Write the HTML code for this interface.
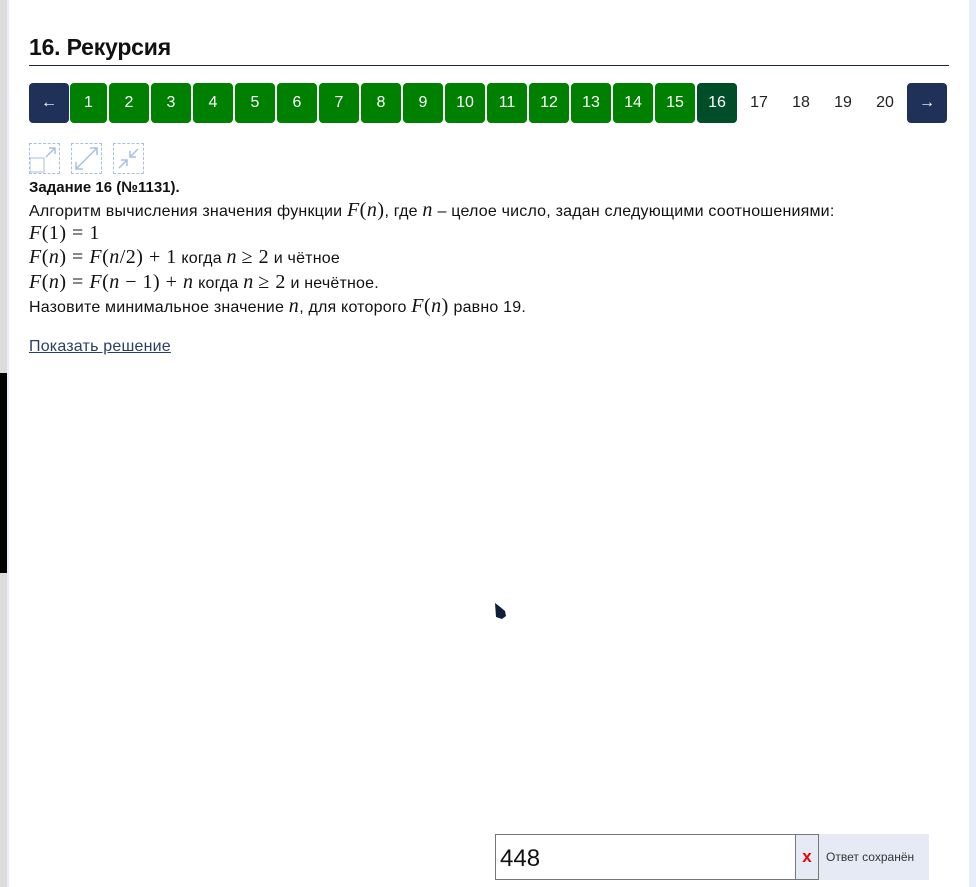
<!DOCTYPE html>
<html><head><meta charset="utf-8"><style>
*{margin:0;padding:0;box-sizing:border-box}
body{width:976px;height:887px;overflow:hidden;background:#fff;font-family:"Liberation Sans",sans-serif;color:#000;position:relative}
.ls{position:absolute;left:0;top:0;width:7px;height:887px;background:#dcdcdc}
.ls2{position:absolute;left:7px;top:0;width:2px;height:887px;background:#e8edf7}
.bb{position:absolute;left:0;top:373px;width:7px;height:200px;background:#000}
.rs{position:absolute;left:969px;top:0;width:7px;height:887px;background:#e8edf7}
h1{position:absolute;left:29px;top:34px;font-size:23px;font-weight:bold;color:#111;letter-spacing:-0.2px}
.hr{position:absolute;left:29px;top:65px;width:920px;height:1px;background:#1e2a3a}
.b{position:absolute;top:83px;height:40px;width:40px;border-radius:4px;color:#fff;font-size:16px;line-height:40px;text-align:center}
.g{background:#008000}.d{background:#004d2a}.n{background:#1f3158}.p{color:#222;background:none}
.ic{position:absolute;top:143px;width:31px;height:31px;border:1px dashed #a9bfe6}
.t{position:absolute;left:29px;font-size:16px;letter-spacing:0.2px;color:#111;white-space:nowrap}
.m{font-family:"Liberation Serif",serif;font-size:20px;letter-spacing:0.5px}
.mi{font-family:"Liberation Serif",serif;font-style:italic;font-size:20px;letter-spacing:0.5px}
a{position:absolute;left:29px;top:338px;font-size:16px;letter-spacing:0.2px;color:#2c3e63;text-decoration:underline}
.inp{position:absolute;left:495px;top:834px;width:301px;height:46px;border:1px solid #777;font-size:24px;padding:10px 0 0 4px;color:#111}
.x{position:absolute;left:795px;top:834px;width:24px;height:46px;border:1px solid #777;background:#e6eaf5;color:#e00;font-weight:bold;font-size:17px;text-align:center;line-height:44px}
.sv{position:absolute;left:819px;top:834px;width:110px;height:46px;background:#e6eaf5;font-size:12px;color:#333;line-height:46px;padding-left:7px}
</style></head><body>
<div class="ls"></div><div class="ls2"></div><div class="bb"></div><div class="rs"></div>
<h1>16. Рекурсия</h1><div class="hr"></div>
<div class="b n" style="left:29px">←</div>
<div class="b g" style="left:70px;width:37px">1</div>
<div class="b g" style="left:109px">2</div>
<div class="b g" style="left:151px">3</div>
<div class="b g" style="left:193px">4</div>
<div class="b g" style="left:235px">5</div>
<div class="b g" style="left:277px">6</div>
<div class="b g" style="left:319px">7</div>
<div class="b g" style="left:361px">8</div>
<div class="b g" style="left:403px">9</div>
<div class="b g" style="left:445px">10</div>
<div class="b g" style="left:487px">11</div>
<div class="b g" style="left:529px">12</div>
<div class="b g" style="left:571px">13</div>
<div class="b g" style="left:613px">14</div>
<div class="b g" style="left:655px">15</div>
<div class="b d" style="left:697px">16</div>
<div class="b p" style="left:739px">17</div>
<div class="b p" style="left:781px">18</div>
<div class="b p" style="left:823px">19</div>
<div class="b p" style="left:865px">20</div>
<div class="b n" style="left:907px">→</div>
<div class="ic" style="left:29px"><svg width="29" height="29"><rect x="0" y="14" width="14" height="14" fill="none" stroke="#a9bfe6"/><path d="M16 13 L25 4 M19 4h6v6" stroke="#a9bfe6" fill="none" stroke-width="1.5"/></svg></div>
<div class="ic" style="left:71px"><svg width="29" height="29"><path d="M4 25 L25 4 M18 4h7v7 M4 18v7h7" stroke="#a9bfe6" fill="none" stroke-width="1.5"/></svg></div>
<div class="ic" style="left:113px"><svg width="29" height="29"><path d="M5 24 L13 16 M7 16h6v6 M24 5 L16 13 M16 7v6h6" stroke="#a9bfe6" fill="none" stroke-width="1.5"/></svg></div>
<div class="t" style="top:179px;font-weight:bold;font-size:15px;letter-spacing:0">Задание 16 (№1131).</div>
<div class="t" style="top:199px">Алгоритм вычисления значения функции <span class="mi">F</span><span class="m">(</span><span class="mi">n</span><span class="m">)</span>, где <span class="mi">n</span> – целое число, задан следующими соотношениями:</div>
<div class="t" style="top:222px"><span class="mi">F</span><span class="m">(1) = 1</span></div>
<div class="t" style="top:246px"><span class="mi">F</span><span class="m">(</span><span class="mi">n</span><span class="m">) = </span><span class="mi">F</span><span class="m">(</span><span class="mi">n</span><span class="m">/2) + 1</span> когда <span class="mi">n</span> <span class="m">≥ 2</span> и чётное</div>
<div class="t" style="top:271px"><span class="mi">F</span><span class="m">(</span><span class="mi">n</span><span class="m">) = </span><span class="mi">F</span><span class="m">(</span><span class="mi">n</span><span class="m"> − 1) + </span><span class="mi">n</span> когда <span class="mi">n</span> <span class="m">≥ 2</span> и нечётное.</div>
<div class="t" style="top:295px">Назовите минимальное значение <span class="mi">n</span>, для которого <span class="mi">F</span><span class="m">(</span><span class="mi">n</span><span class="m">)</span> равно 19.</div>
<a>Показать решение</a>
<svg style="position:absolute;left:494px;top:602px" width="14" height="18"><path d="M1 1 L5 4 L11 9 L12 14 L8 17 L2 15 Z" fill="#0f1f3a"/></svg>
<div class="inp">448</div><div class="x">x</div><div class="sv">Ответ сохранён</div>
</body></html>
